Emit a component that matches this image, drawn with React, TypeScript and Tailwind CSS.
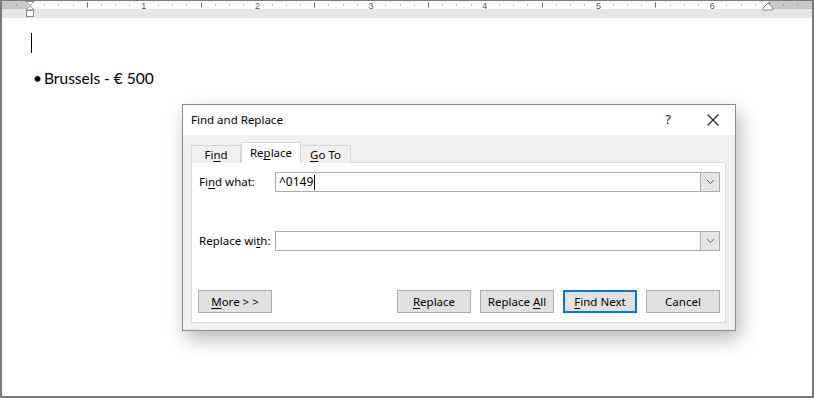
import React from 'react';

const ui = "font-['Noto_Sans','Open_Sans',sans-serif]";

const ORIGIN = 28;
const INCH = 113.7;

function Ruler() {
  const marks: React.ReactNode[] = [];
  for (let k = -2; k <= 55; k++) {
    const x = ORIGIN + (k * INCH) / 8;
    if (x < 0 || x > 810) continue;
    if (k === 0) continue;
    if (k % 8 === 0) {
      marks.push(
        <text key={k} x={x} y={7.5} fontSize={9} textAnchor="middle" fill="#555" fontFamily="Liberation Sans, sans-serif">
          {k / 8}
        </text>
      );
    } else if (k % 4 === 0) {
      marks.push(<rect key={k} x={Math.round(x)} y={1.5} width={1} height={5} fill="#666" />);
    } else {
      marks.push(<rect key={k} x={Math.round(x)} y={3.5} width={1} height={1} fill="#777" />);
    }
  }
  return (
    <svg width={810} height={17} className="block">
      <rect x={0} y={0} width={810} height={8} fill="#fff" />
      <rect x={0} y={0} width={26} height={8} fill="#c8c8c8" />
      <rect x={766} y={0} width={44} height={8} fill="#c8c8c8" />
      <rect x={0} y={8} width={810} height={9} fill="#e6e6e6" />
      {marks}
      {/* left indent */}
      <polygon points="24,0.5 32,0.5 28,4.5 32,9 24,9 28,4.5" fill="#fff" stroke="#888" strokeWidth={1} />
      <rect x={24.5} y={9.5} width={7} height={6} fill="#fff" stroke="#888" strokeWidth={1} />
      {/* right indent */}
      <polygon points="766,2 761,7 761,9 771,9 771,7" fill="#fff" stroke="#888" strokeWidth={1} />
    </svg>
  );
}

function Chevron() {
  return (
    <svg width={9} height={6} viewBox="0 0 9 6">
      <polyline points="1,1 4.5,4.5 8,1" fill="none" stroke="#606060" strokeWidth={1} />
    </svg>
  );
}

function Combo({ value }: { value?: string }) {
  return (
    <div className="flex-1 h-[20px] flex items-stretch border border-[#ababab] bg-white">
      <div className="flex-1 flex items-center pl-[3px] text-[12px] text-black">
        {value}
        {value && <span className="w-px h-[15px] bg-black ml-px" />}
      </div>
      <div className="w-[19px] bg-[#e5e5e5] border-l border-[#ababab] flex items-center justify-center">
        <Chevron />
      </div>
    </div>
  );
}

function Btn({ children, primary }: { children: React.ReactNode; primary?: boolean }) {
  return (
    <div
      className={
        primary
          ? 'w-[74px] h-[23px] flex items-center justify-center bg-[#e1e1e1] border-2 border-[#0078d7] text-[11.5px] text-black'
          : 'w-[74px] h-[23px] flex items-center justify-center bg-[#e1e1e1] border border-[#adadad] text-[11.5px] text-black'
      }
    >
      <span>{children}</span>
    </div>
  );
}

function Dialog() {
  return (
    <div className={`absolute left-[180px] top-[103px] w-[554px] h-[227px] flex flex-col border border-[#8a8a8a] bg-[#f0f0f0] shadow-[4px_8px_18px_rgba(0,0,0,0.28)] ${ui}`}>
      {/* Title bar */}
      <div className="h-[30px] bg-white flex items-center pl-[8px] shrink-0">
        <span className="text-[11.5px] text-black -mt-px">Find and Replace</span>
        <span className="ml-auto text-[13px] text-[#222] mr-[36px]">?</span>
        <svg width={12} height={12} className="mr-[16px]">
          <path d="M0.5 0.5 L11.5 11.5 M11.5 0.5 L0.5 11.5" stroke="#222" strokeWidth={1.1} />
        </svg>
      </div>

      {/* Body */}
      <div className="flex-1 flex flex-col pl-[8px] pr-[9px] pt-[8px] pb-[7px]">
        {/* Tabs */}
        <div className="flex items-end h-[20px] relative z-10 -mb-px">
          <div className="w-[50px] h-[18px] flex items-center justify-center border border-b-0 border-[#d9d9d9] bg-[#f0f0f0] text-[11.5px] text-black">
            <span>Fi<u className="underline-offset-2">n</u>d</span>
          </div>
          <div className="w-[60px] h-[21px] flex items-center justify-center border border-b-0 border-[#d9d9d9] bg-white text-[11.5px] text-black">
            <span>Re<u className="underline-offset-2">p</u>lace</span>
          </div>
          <div className="w-[50px] h-[18px] flex items-center justify-center border border-b-0 border-l-0 border-[#d9d9d9] bg-[#f0f0f0] text-[11.5px] text-black">
            <span><u className="underline-offset-2">G</u>o To</span>
          </div>
        </div>

        {/* Panel */}
        <div className="flex-1 flex flex-col bg-white border border-[#d9d9d9] pt-[9px] pl-[6px] pr-[5px] pb-[8px]">
          <div className="flex items-center">
            <div className="w-[77px] pl-px text-[11.5px] text-black">
              Fi<u className="underline-offset-2">n</u>d what:
            </div>
            <Combo value="^0149" />
          </div>
          <div className="h-[39px]" />
          <div className="flex items-center">
            <div className="w-[77px] pl-px text-[11.5px] text-black">
              Replace wi<u className="underline-offset-2">t</u>h:
            </div>
            <Combo />
          </div>
          <div className="h-[39px]" />
          <div className="flex items-center">
            <Btn>
              <u className="underline-offset-2">M</u>ore &gt; &gt;
            </Btn>
            <div className="ml-auto flex gap-[9px]">
              <Btn>
                <u className="underline-offset-2">R</u>eplace
              </Btn>
              <Btn>
                Replace <u className="underline-offset-2">A</u>ll
              </Btn>
              <Btn primary>
                <u className="underline-offset-2">F</u>ind Next
              </Btn>
              <Btn>Cancel</Btn>
            </div>
          </div>
        </div>
      </div>
    </div>
  );
}

export default function App() {
  return (
    <div className="relative w-[814px] h-[398px] bg-white border-t border-l-2 border-r-2 border-b-2 border-[#7a7a7a] overflow-hidden">
      <Ruler />
      <div className="pl-[29px] pt-[15px]">
        <div className="w-px h-[20px] bg-black" />
        <div className="mt-[16px] h-[20px] flex items-center font-['Lato','Open_Sans',sans-serif] text-[15.5px] text-black">
          <span className="ml-[2px] w-[11px]">•</span>
          <span>Brussels - € 500</span>
        </div>
      </div>
      <Dialog />
    </div>
  );
}
